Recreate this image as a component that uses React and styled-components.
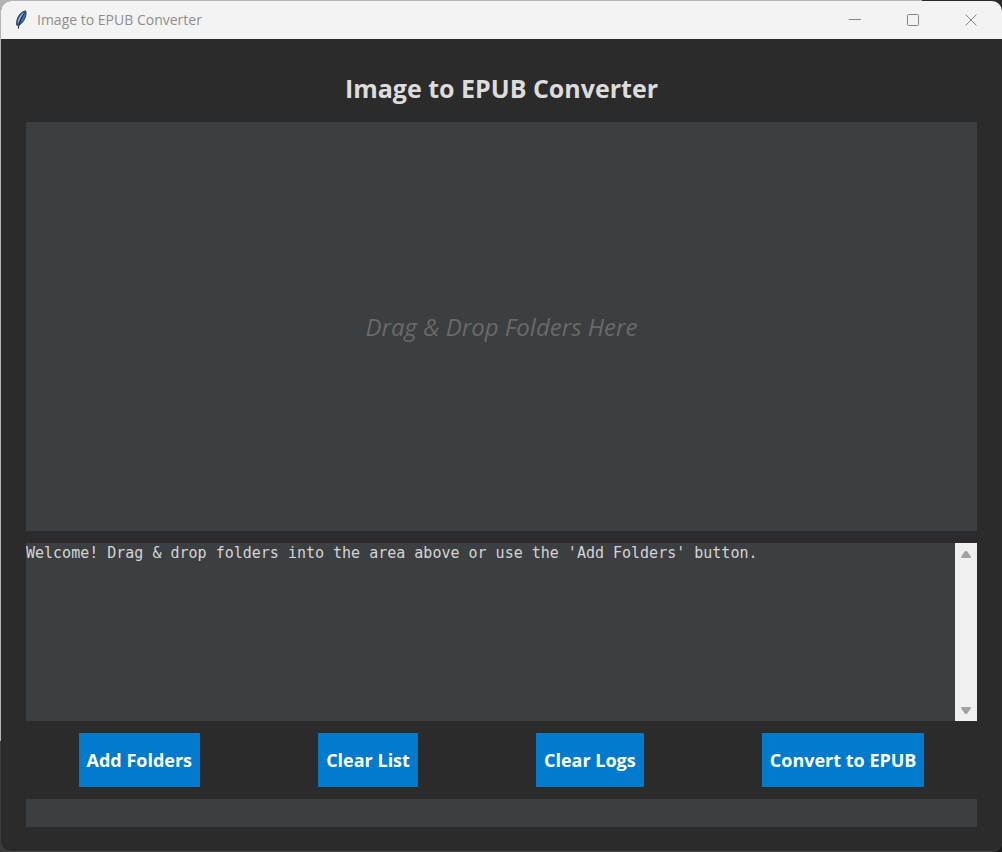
import React from "react";
import styled, { createGlobalStyle } from "styled-components";

const GlobalStyle = createGlobalStyle`
  * { box-sizing: border-box; }
  body { margin: 0; background: #1b1b1b; font-family: "Open Sans", "Noto Sans", sans-serif; }
`;

const Desktop = styled.div`
  min-height: 100vh;
  display: flex;
  padding: 1px 0 0 1px;
  background:
    linear-gradient(to right, #b4b4b4 92%, #2b2b2b 92%) top / 100% 12px no-repeat,
    linear-gradient(to bottom, #b4b4b4 87%, #3c3c3c 87%) left / 12px 100% no-repeat,
    #1b1b1b;
`;

const Window = styled.div`
  flex: 1;
  min-width: 0;
  display: flex;
  flex-direction: column;
  overflow: hidden;
  border-bottom: 1px solid #454545;
  border-radius: 10px;
  background: #2b2b2b;
`;

const TitleBar = styled.header`
  height: 38px;
  flex: none;
  display: flex;
  align-items: center;
  padding: 0 2px 0 12px;
  background: #f3f3f3;
  color: #8e8e8e;
`;

const Caption = styled.span`
  flex: 1;
  margin-left: 8px;
  font-size: 14px;
  line-height: 20px;
`;

const WindowButton = styled.button`
  width: 58px;
  height: 38px;
  display: flex;
  align-items: center;
  justify-content: center;
  padding: 0;
  border: 0;
  background: none;
  color: #858585;
`;

const Content = styled.main`
  flex: 1;
  display: flex;
  flex-direction: column;
  gap: 12px;
  padding: 31px 25px 24px;
`;

const Heading = styled.h1`
  margin: 0 0 4px;
  text-align: center;
  font-size: 25px;
  font-weight: 700;
  line-height: 36px;
  color: #dcdcdc;
`;

const DropZone = styled.section`
  flex: 1;
  min-height: 200px;
  display: flex;
  align-items: center;
  justify-content: center;
  background: #3c3f41;
  color: #696969;
  font-size: 24px;
  font-style: italic;
`;

const LogPanel = styled.section`
  height: 178px;
  display: flex;
`;

const LogText = styled.textarea`
  flex: 1;
  min-width: 0;
  margin: 0;
  padding: 1px 0;
  border: 0;
  outline: 0;
  resize: none;
  overflow: hidden;
  background: #3c3f41;
  color: #d4d4d4;
  font-family: "DejaVu Sans Mono", monospace;
  font-size: 15px;
  line-height: 19px;
`;

const ScrollBar = styled.div`
  width: 22px;
  display: flex;
  flex-direction: column;
  justify-content: space-between;
  background: #f0f0f0;
`;

const ScrollButton = styled.button`
  height: 22px;
  display: flex;
  align-items: center;
  justify-content: center;
  padding: 0;
  border: 0;
  background: none;
`;

const Actions = styled.div`
  display: flex;
  justify-content: space-around;
  gap: 13px;
`;

const ActionButton = styled.button`
  height: 54px;
  padding: 0 8px;
  border: 0;
  background: #007acc;
  color: #ffffff;
  font-family: inherit;
  font-size: 18px;
  font-weight: 700;
`;

const Progress = styled.progress`
  display: block;
  width: 100%;
  height: 28px;
  appearance: none;
  border: 0;
  background: #3c3f41;

  &::-webkit-progress-bar { background: #3c3f41; }
  &::-webkit-progress-value { background: #007acc; }
`;

function Feather() {
  return (
    <svg width="16" height="20" viewBox="0 0 16 20" aria-hidden="true">
      <path d="M12.600.8C9 1.400 5.400 5 4.200 9.200c-.7 2.300-.9 4.500-.3 6.200l2.300-.4c3.600-1.900 6.100-6.200 6.700-10 .2-1.600.4-3.300-.3-4.200Z" fill="#3f6ea8" stroke="#1b2738" strokeWidth=".8" />
      <path d="M11.700 1.900C8.700 3.600 6 7 5 11.300l.3 1.700C6.500 9.400 8.600 5.600 11.700 1.900Z" fill="#a5c3e6" />
      <path d="M12.100 2.400C9 6.200 6.600 11 5.300 18.600" fill="none" stroke="#1a2330" strokeWidth="1" />
    </svg>
  );
}

const windowIcons = {
  Minimize: <path d="M0 6.500h12" />,
  Maximize: <rect x=".5" y="1.500" width="11" height="11" rx="1" />,
  Close: <path d="M.5 1.500l11 11M11.500 1.500l-11 11" />,
};

function Arrow({ down }) {
  return (
    <svg width="12" height="10" viewBox="0 0 12 10" aria-hidden="true">
      <path
        d={down ? "M2 3h8L6.500 8h-1Z" : "M2 8h8L6.500 3h-1Z"}
        fill="#a3a3a3"
        stroke="#a3a3a3"
        strokeWidth="2"
        strokeLinejoin="round"
      />
    </svg>
  );
}

const actions = ["Add Folders", "Clear List", "Clear Logs", "Convert to EPUB"];

export default function App() {
  return (
    <Desktop>
      <GlobalStyle />
      <Window>
        <TitleBar>
          <Feather />
          <Caption>Image to EPUB Converter</Caption>
          {Object.entries(windowIcons).map(([name, shape]) => (
            <WindowButton key={name} aria-label={name}>
              <svg width="12" height="14" viewBox="0 0 12 14" fill="none" stroke="currentColor">
                {shape}
              </svg>
            </WindowButton>
          ))}
        </TitleBar>
        <Content>
          <Heading>Image to EPUB Converter</Heading>
          <DropZone>Drag &amp; Drop Folders Here</DropZone>
          <LogPanel>
            <LogText
              readOnly
              aria-label="Log"
              defaultValue="Welcome! Drag & drop folders into the area above or use the 'Add Folders' button."
            />
            <ScrollBar>
              <ScrollButton aria-label="Scroll up"><Arrow /></ScrollButton>
              <ScrollButton aria-label="Scroll down"><Arrow down /></ScrollButton>
            </ScrollBar>
          </LogPanel>
          <Actions>
            {actions.map((label) => (
              <ActionButton key={label}>{label}</ActionButton>
            ))}
          </Actions>
          <Progress aria-label="Conversion progress" value={0} max={100} />
        </Content>
      </Window>
    </Desktop>
  );
}
